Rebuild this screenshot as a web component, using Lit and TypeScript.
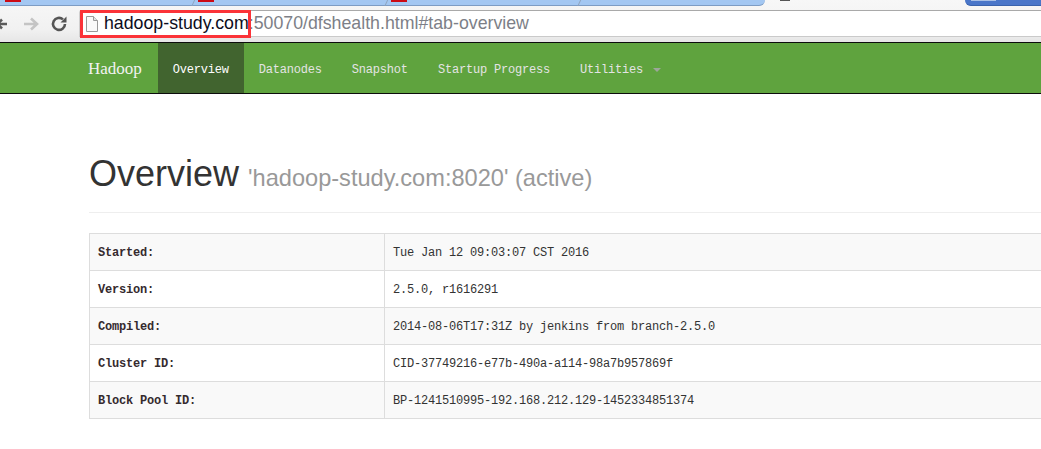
import { LitElement, html, css } from "lit";
import { customElement } from "lit/decorators.js";

const rows: [string, string][] = [
  ["Started:", "Tue Jan 12 09:03:07 CST 2016"],
  ["Version:", "2.5.0, r1616291"],
  ["Compiled:", "2014-08-06T17:31Z by jenkins from branch-2.5.0"],
  ["Cluster ID:", "CID-37749216-e77b-490a-a114-98a7b957869f"],
  ["Block Pool ID:", "BP-1241510995-192.168.212.129-1452334851374"],
];

@customElement("app-root")
export class AppRoot extends LitElement {
  static styles = css`
    :host { display: block; width: 1041px; height: 449px; overflow: hidden; background: #fff; position: relative; font-family: "Liberation Sans", Arial, sans-serif; }
    .chrome { background: linear-gradient(#f7f7f7, #f1f1f1 70%, #e6e6e6); height: 42px; }
    .strip { display: flex; height: 6px; }
    .tabs { width: 765px; display: flex; background: #a3c7f2; border-bottom: 1px solid #7d9cc4; border-bottom-right-radius: 6px; box-sizing: border-box; height: 6px; }
    .tab { width: 193px; flex: none; position: relative; box-sizing: border-box; padding-left: 5px; }
    .tab.last { flex: 1; }
    .tab::after { content: ""; position: absolute; right: -1px; top: -1px; width: 1px; height: 7px; background: #8ea3bd; transform: skewX(-25deg); }
    .tab.last::after { display: none; }
    .fav { display: block; width: 16px; height: 2px; background: #cc0a14; }
    .gap { flex: 1; position: relative; }
    .min { display: block; width: 10px; height: 1px; margin-left: 15px; background: #555; }
    .win { width: 76px; height: 6px; background: #4a76c9; border-bottom: 1px solid #3a63ad; border-bottom-left-radius: 6px; box-sizing: border-box; padding-left: 6px; }
    .win i { display: block; width: 25px; height: 1px; background: #a9c0e6; }
    .toolbar { display: flex; padding-top: 4px; }
    .buttons { width: 79px; height: 27px; flex: none; position: relative; }
    .buttons svg { display: block; }
    .omnibox { flex: 1; height: 27px; box-sizing: border-box; background: #fff; border-top: 1px solid #a9a9a9; border-bottom: 1px solid #cacaca; border-left: 1px solid #cfcfcf; border-top-left-radius: 3px; display: flex; align-items: center; padding-left: 6px; font-size: 17.75px; white-space: nowrap; }
    .omnibox svg { flex: none; margin-right: 6px; }
    .host { color: #0c0c1c; }
    .rest { color: #7d7f87; }
    .hl { position: absolute; left: 80px; top: 10px; width: 171px; height: 28px; box-sizing: border-box; border: 3px solid #fb3338; pointer-events: none; }
    nav { display: flex; height: 52px; box-sizing: border-box; border-top: 1px solid #0c0c0c; border-bottom: 1px solid #0c0c0c; background: #5fa33e; padding-left: 73px; font-family: "Liberation Mono", monospace; font-size: 12px; letter-spacing: -0.2px; color: #e4e4e4; }
    nav a { display: flex; align-items: center; padding: 3px 15px 0; white-space: nowrap; }
    nav a.brand { font-family: "Liberation Serif", serif; font-size: 17px; letter-spacing: 0; padding: 1px 16px 0 15px; color: #f2f2f2; }
    nav a.active { background: #41642f; color: #fff; }
    .caret { width: 0; height: 0; margin-left: 10px; margin-top: 0; border-left: 4px solid transparent; border-right: 4px solid transparent; border-top: 4px solid #9da79a; }
    main { padding-left: 89px; }
    h1 { margin: 60px 0 20px; padding-bottom: 13px; border-bottom: 1px solid #eee; font-size: 36px; line-height: 39.6px; font-weight: 400; color: #333; white-space: nowrap; }
    small { font-size: 23.6px; color: #999; margin-left: -1px; }
    table { border-collapse: collapse; width: 1000px; table-layout: fixed; font-family: "Liberation Mono", monospace; font-size: 12px; letter-spacing: -0.2px; color: #333; }
    th, td { border: 1px solid #ddd; height: 37px; box-sizing: border-box; padding: 3px 8px 0; text-align: left; white-space: nowrap; }
    th { width: 295px; color: #352a2e; }
    tr:nth-child(odd) { background: #f9f9f9; }
  `;

  render() {
    return html`
      <div class="chrome">
        <div class="strip">
          <div class="tabs">
            <div class="tab"><span class="fav"></span></div>
            <div class="tab"><span class="fav"></span></div>
            <div class="tab"><span class="fav"></span></div>
            <div class="tab last"></div>
          </div>
          <div class="gap"><span class="min"></span></div>
          <div class="win"><i></i></div>
        </div>
        <div class="toolbar">
          <div class="buttons">
            <svg width="79" height="27" viewBox="0 0 79 27">
              <path d="M-2 14H7M2 9.5L-2.5 14L2 18.5" fill="none" stroke="#5a5a5a" stroke-width="2.6"/>
              <path d="M24 14H36M31 8.5L37 14L31 19.5" fill="none" stroke="#c4c4c4" stroke-width="2.6"/>
              <path d="M65 14a6 6 0 1 1-2-4.6" fill="none" stroke="#555" stroke-width="2.6"/>
              <path d="M66.5 6.5V12.5H60.5Z" fill="#555"/>
            </svg>
          </div>
          <div class="omnibox">
            <svg width="12" height="16" viewBox="0 0 12 16">
              <path d="M.5.5H7.5L11.5 4.5V15.5H.5Z" fill="#fafafa" stroke="#9a9a9a"/>
              <path d="M7.5.5V4.5H11.5" fill="#e4e4e4" stroke="#9a9a9a"/>
            </svg>
            <span class="host">hadoop-study.com</span><span class="rest">:50070/dfshealth.html#tab-overview</span>
          </div>
        </div>
      </div>
      <div class="hl"></div>
      <nav>
        <a class="brand">Hadoop</a>
        <a class="active">Overview</a>
        <a>Datanodes</a>
        <a>Snapshot</a>
        <a>Startup Progress</a>
        <a>Utilities<span class="caret"></span></a>
      </nav>
      <main>
        <h1>Overview <small>'hadoop-study.com:8020' (active)</small></h1>
        <table>
          ${rows.map(([k, v]) => html`<tr><th>${k}</th><td>${v}</td></tr>`)}
        </table>
      </main>
    `;
  }
}
